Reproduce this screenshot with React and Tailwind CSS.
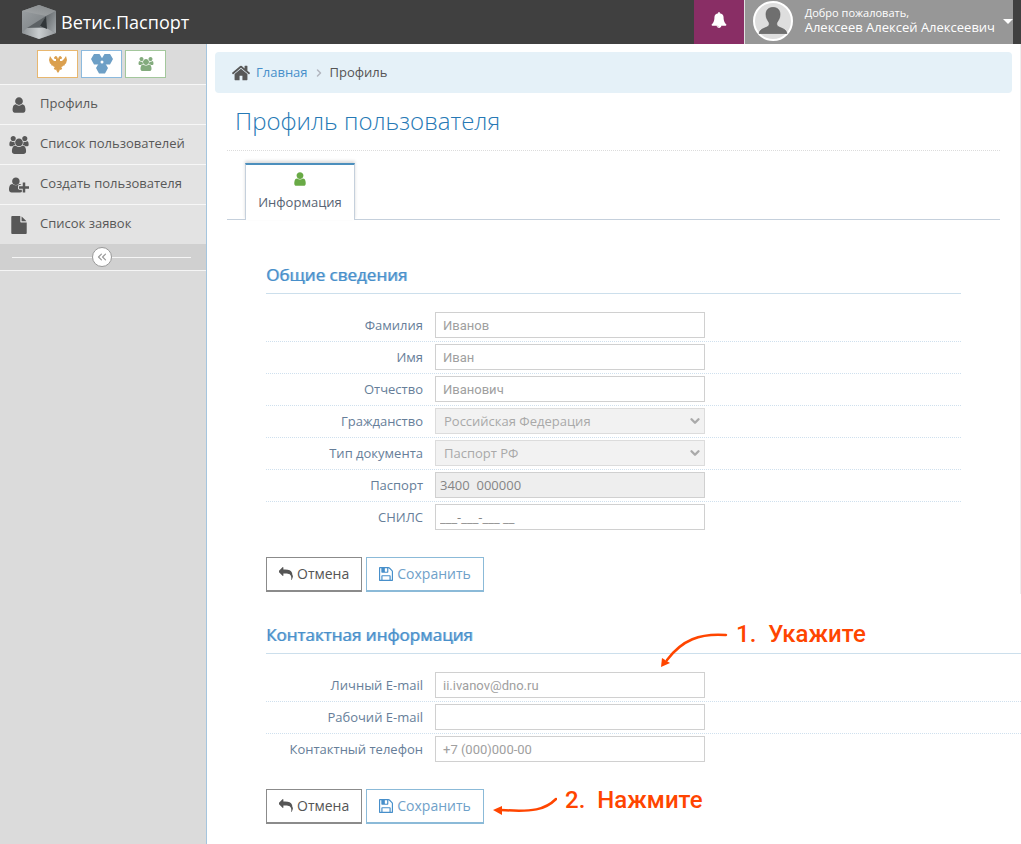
import { ChevronDown, ChevronRight, ChevronsLeft } from 'lucide-react';

const icons = {
  user: {
    box: '0 0 1792 1792',
    d: 'M1536 1399q0 109-62.5 187t-150.5 78h-854q-88 0-150.5-78t-62.5-187q0-85 8.5-160.5t31.5-152 58.5-131 94-89 134.5-34.5q131 128 313 128t313-128q76 0 134.5 34.5t94 89 58.5 131 31.5 152 8.5 160.5zm-256-887q0 159-112.5 271.5t-271.5 112.5-271.5-112.5-112.5-271.5 112.5-271.5 271.5-112.5 271.5 112.5 112.5 271.5z',
  },
  users: {
    box: '0 0 1920 1792',
    d: 'M593 896q-162 5-265 128H194q-82 0-138-40.5T0 865q0-353 124-353 6 0 43.5 21t97.5 42.5T384 597q67 0 133-23-5 37-5 66 0 139 81 256zm1071 637q0 120-73 189.5t-194 69.5H523q-121 0-194-69.5T256 1533q0-53 3.5-103.5t14-109T300 1212t43-97.5 62-81 85.5-53.5T602 960q10 0 43 21.5t73 48 107 48 135 21.5 135-21.5 107-48 73-48 43-21.5q61 0 111.5 20t85.5 53.5 62 81 43 97.5 26.5 108.5 14 109 3.5 103.5zM640 256q0 106-75 181t-181 75-181-75-75-181 75-181T384 0t181 75 75 181zm704 384q0 159-112.5 271.5T960 1024 688.5 911.5 576 640t112.5-271.5T960 256t271.5 112.5T1344 640zm576 225q0 78-56 118.5t-138 40.5h-134q-103-123-265-128 81-117 81-256 0-29-5-66 66 23 133 23 59 0 119-21.5t97.5-42.5 43.5-21q124 0 124 353zm-128-609q0 106-75 181t-181 75-181-75-75-181 75-181 181-75 181 75 75 181z',
  },
  userPlus: {
    box: '0 0 2048 1792',
    d: 'M704 896q-159 0-271.5-112.5T320 512t112.5-271.5T704 128t271.5 112.5T1088 512 975.5 783.5 704 896zm960 128h352q13 0 22.5 9.5t9.5 22.5v192q0 13-9.5 22.5t-22.5 9.5h-352v352q0 13-9.5 22.5t-22.5 9.5h-192q-13 0-22.5-9.5t-9.5-22.5v-352h-352q-13 0-22.5-9.5t-9.5-22.5v-192q0-13 9.5-22.5t22.5-9.5h352V672q0-13 9.5-22.5t22.5-9.5h192q13 0 22.5 9.5t9.5 22.5v352zm-736 224q0 52 38 90t90 38h256v238q-68 50-171 50H267q-121 0-194-69T0 1365q0-53 3.5-103.5t14-109T44 1044t43-97.5 62-81 85.5-53.5T346 792q19 0 39 17 79 61 154.5 91.5T704 931t164.5-30.5T1023 809q20-17 39-17 132 0 217 96h-223q-52 0-90 38t-38 90v232z',
  },
  file: {
    box: '0 0 1792 1792',
    d: 'M1152 512v-472q22 14 36 28l408 408q14 14 28 36h-472zm-128 32q0 40 28 68t68 28h544v1056q0 40-28 68t-68 28h-1344q-40 0-68-28t-28-68v-1600q0-40 28-68t68-28h800v544z',
  },
  home: {
    box: '0 0 1792 1792',
    d: 'M1472 992v480q0 26-19 45t-45 19h-384v-384h-256v384h-384q-26 0-45-19t-19-45v-480q0-1 .5-3t.5-3l575-474 575 474q1 2 1 6zm223-69l-62 74q-8 9-21 11h-3q-13 0-21-7l-692-577-692 577q-12 8-24 7-13-2-21-11l-62-74q-8-10-7-23.5t11-21.5l719-599q32-26 76-26t76 26l244 204v-195q0-14 9-23t23-9h192q14 0 23 9t9 23v408l219 182q10 8 11 21.5t-7 23.5z',
  },
  bell: {
    box: '0 0 1792 1792',
    d: 'M912 1696q0-16-16-16-59 0-101.5-42.5t-42.5-101.5q0-16-16-16t-16 16q0 73 51.5 124.5t124.5 51.5q16 0 16-16zm816-288q0 52-38 90t-90 38h-448q0 106-75 181t-181 75-181-75-75-181h-448q-52 0-90-38t-38-90q50-42 91-88t85-119.5 74.5-158.5 50-206 19.5-260q0-152 117-282.5t307-158.5q-8-19-8-39 0-40 28-68t68-28 68 28 28 68q0 20-8 39 190 28 307 158.5t117 282.5q0 139 19.5 260t50 206 74.5 158.5 85 119.5 91 88z',
  },
  reply: {
    box: '0 0 1792 1792',
    d: 'M1792 1120q0 166-127 451-3 7-10.5 24t-13.5 30-13 22q-12 17-28 17-15 0-23.5-10t-8.5-25q0-9 2.5-26.5t2.5-23.5q5-68 5-123 0-112-19.5-200.5t-54-153.5-89-112.5-117-80-147-47.5-171-24-196.5-7h-224v256q0 26-19 45t-45 19-45-19l-512-512q-19-19-19-45t19-45l512-512q19-19 45-19t45 19 19 45v256h224q713 0 875 403 53 134 53 333z',
  },
  save: {
    box: '128 128 1536 1536',
    d: 'M512 1536h768v-384h-768v384zm896 0h128v-896q0-14-10-38.5t-20-34.5l-281-281q-10-10-34-20t-39-10v416q0 40-28 68t-68 28h-576q-40 0-68-28t-28-68v-416h-128v1280h128v-416q0-40 28-68t68-28h832q40 0 68 28t28 68v416zm-384-928v-320q0-13-9.5-22.5t-22.5-9.5h-192q-13 0-22.5 9.5t-9.5 22.5v320q0 13 9.5 22.5t22.5 9.5h192q13 0 22.5-9.5t9.5-22.5zm640 32v928q0 40-28 68t-68 28h-1344q-40 0-68-28t-28-68v-1344q0-40 28-68t68-28h928q40 0 88 20t76 48l280 280q28 28 48 76t20 88z',
  },
};

function Icon({ name, className }) {
  return (
    <svg viewBox={icons[name].box} className={className} fill="currentColor" aria-hidden="true">
      <path d={icons[name].d} />
    </svg>
  );
}

function Logo() {
  return (
    <svg viewBox="0 0 34 34" className="h-[34px] w-[34px]" aria-hidden="true">
      <defs>
        <linearGradient id="top" x1="0" y1="1" x2="1" y2="0">
          <stop offset="0" stopColor="#a4a8aa" />
          <stop offset="1" stopColor="#85898b" />
        </linearGradient>
        <linearGradient id="left" x1="0" y1="0" x2="1" y2="1">
          <stop offset="0" stopColor="#9ca1a4" />
          <stop offset="1" stopColor="#6f7477" />
        </linearGradient>
        <linearGradient id="bottom" x1="0" y1="0" x2="1" y2="0">
          <stop offset="0" stopColor="#8c9194" />
          <stop offset="0.500" stopColor="#c9cdcf" />
          <stop offset="1" stopColor="#95999c" />
        </linearGradient>
        <linearGradient id="right" x1="0" y1="0" x2="1" y2="1">
          <stop offset="0" stopColor="#5c6164" />
          <stop offset="1" stopColor="#a6abae" />
        </linearGradient>
      </defs>
      <path d="M17 0 34 6v22l-17 6L0 28V6z" fill="url(#left)" />
      <path d="M17 0 34 6 24 11 0 6z" fill="url(#top)" />
      <path d="M24 11 34 6v22l-10-5z" fill="url(#right)" />
      <path d="M0 28 5 23l19 0 10 5-17 6z" fill="url(#bottom)" />
      <path d="M24 11 5 23 18 22z" fill="#5c6164" />
      <path d="M24 11 25 24 18 21z" fill="#313639" />
    </svg>
  );
}

function Eagle() {
  return (
    <svg viewBox="0 0 18 18" className="h-[18px] w-[18px]" fill="#dba04f" aria-hidden="true">
      <path d="M1 1 3 4l2 2h2V4H5.500L5 2.500 6.500 1 8 1.500 9 4l1-2.500 1.500-.5L13 2.500 12.500 4H11v2h2l2-2 2-3 1 4-.6 2-.4 1.500-1 .5-.5 1.500-1.500.2-1 1.300-1-.2 1.200 1.700L12 15l-1.200-.6-.4 1.600L9 18l-1.400-2-.4-1.600L6 15l-1.200-1.500L6 11.800l-1 .2-1-1.300-1.500-.2L2 9l-1-.5L.6 7 0 5z" />
    </svg>
  );
}

function Hexagons() {
  return (
    <svg viewBox="0 0 22 20" className="h-5 w-[22px]" fill="#6d9fc6" aria-hidden="true">
      <path d="M3 0h5.500L11.500 5 8.500 10.500H3L0 5z" />
      <path d="M13.500 0H19l3 5-3 5.500h-5.500l-3-5.500z" />
      <path d="M8 9h6l3 5-3 5.500H8L5 14z" />
      <path d="M8 6h6v5H8z" />
      <circle cx="11" cy="8" r="1.500" fill="#fff" />
    </svg>
  );
}

function Avatar() {
  return (
    <svg viewBox="0 0 40 40" className="h-10 w-10" aria-hidden="true">
      <circle cx="20" cy="20" r="19" fill="#dedede" stroke="#fff" strokeWidth="2" />
      <path
        d="M20 6.500c4.500 0 7 2.500 7 7 0 4-2 6-3 8-.8 2 0 3.500 2 4.500 3 1.500 7 2 8 6.500H6c1-4.500 5-5 8-6.500 2-1 2.800-2.500 2-4.500-1-2-3-4-3-8 0-4.500 2.500-7 7-7z"
        fill="#6f6f6f"
        stroke="#555"
        strokeWidth=".6"
      />
    </svg>
  );
}

const menu = [
  { icon: 'user', label: 'Профиль', size: 'h-[18px] w-[18px]' },
  { icon: 'users', label: 'Список пользователей', size: 'h-[18px] w-5' },
  { icon: 'userPlus', label: 'Создать пользователя', size: 'h-[18px] w-5' },
  { icon: 'file', label: 'Список заявок', size: 'h-[18px] w-[18px]' },
];

function Header() {
  return (
    <header className="flex h-11 items-stretch bg-[#404040] pr-2 text-white">
      <a href="#" className="flex items-center gap-[5px] pl-[22px] text-lg">
        <Logo />
        Ветис.Паспорт
      </a>
      <button aria-label="Уведомления" className="ml-auto flex w-[50px] items-center justify-center bg-[#892e65] pb-1">
        <Icon name="bell" className="h-4 w-4" />
      </button>
      <button className="flex items-center border-l border-[#e1e1e1] bg-[#979797] pb-[2px] pl-2 text-left">
        <Avatar />
        <span className="ml-3 pb-[2px] text-[13px] leading-[14px]">
          <small className="block text-[11px]">Добро пожаловать,</small>
          Алексеев Алексей Алексеевич
        </span>
        <span className="ml-2 border-x-[5px] border-t-[5px] border-x-transparent border-t-white" />
      </button>
    </header>
  );
}

function Sidebar() {
  return (
    <aside className="w-[207px] shrink-0 border-r border-[#a5c5de] bg-[#dbdbdb] text-[#585858]">
      <div className="flex h-10 items-center gap-[3px] pl-[37px]">
        <button aria-label="Россельхознадзор" className="flex h-7 w-[41px] items-center justify-center border border-[#e8b76f] bg-white">
          <Eagle />
        </button>
        <button aria-label="Компоненты" className="flex h-7 w-[41px] items-center justify-center border border-[#8cbade] bg-white">
          <Hexagons />
        </button>
        <button aria-label="Пользователи" className="flex h-7 w-[41px] items-center justify-center border border-[#a3c79c] bg-white text-[#83ab7d]">
          <Icon name="users" className="h-[14px] w-4" />
        </button>
      </div>
      <nav>
        {menu.map((item) => (
          <a
            key={item.label}
            href="#"
            className="flex h-10 items-center gap-[11px] border-t border-[#f7f7f7] bg-[#e3e3e3] pb-[2px] pl-[9px] text-[13px]"
          >
            <span className="flex w-5 justify-center pt-[2px]">
              <Icon name={item.icon} className={item.size} />
            </span>
            {item.label}
          </a>
        ))}
      </nav>
      <div className="flex h-[27px] items-center border-b border-[#f5f5f5] bg-[#d0d0d0] px-3">
        <span className="h-px w-20 bg-[#f5f5f5]" />
        <button aria-label="Свернуть меню" className="flex h-5 w-5 items-center justify-center rounded-full border border-[#999] bg-white text-[#999]">
          <ChevronsLeft size={14} strokeWidth={2} />
        </button>
        <span className="mr-[3px] h-px flex-1 bg-[#f5f5f5]" />
      </div>
    </aside>
  );
}

function Section({ title, children }) {
  return (
    <>
      <h2 className="mb-4 h-[30px] border-b border-[#ccdfec] text-[17px] leading-[22px] text-[#478fca] [text-shadow:1px_0_0_#478fca99]">
        {title}
      </h2>
      <div>{children}</div>
    </>
  );
}

function Row({ id, label, children }) {
  return (
    <div className="flex h-8 items-start border-b border-dotted border-[#cfe0ee] pt-[2px] last:border-transparent">
      <label htmlFor={id} className="mr-3 w-[157px] shrink-0 text-right text-[13px] leading-[26px] text-[#667e99]">
        {label}
      </label>
      {children}
    </div>
  );
}

function TextField({ id, label, value, type = 'text' }) {
  return (
    <Row id={id} label={label}>
      <input
        id={id}
        type={type}
        defaultValue={value}
        className="h-[26px] w-[270px] border border-[#d0d0d0] bg-white px-[7px] font-['Roboto',sans-serif] text-[13px] text-[#a0a0a0]"
      />
    </Row>
  );
}

function SelectField({ id, label, value }) {
  return (
    <Row id={id} label={label}>
      <div className="relative w-[270px]">
        <select
          id={id}
          disabled
          className="block h-[26px] w-full appearance-none border border-[#dcdcdc] bg-[#f2f2f2] px-2 pt-px text-[13px] text-[#a9a9a9]"
        >
          <option>{value}</option>
        </select>
        <ChevronDown size={14} strokeWidth={4} className="absolute top-[6px] right-[3px] text-[#aaa]" />
      </div>
    </Row>
  );
}

function Actions() {
  return (
    <div className="mt-[23px] flex gap-1 text-sm">
      <button type="button" className="flex h-[35px] items-center gap-1 border border-b-2 border-[#8b8b8b] bg-white px-3 text-[#555]">
        <Icon name="reply" className="h-[14px] w-[14px]" />
        Отмена
      </button>
      <button type="submit" className="flex h-[35px] items-center gap-1 border border-b-2 border-[#8bbad8] bg-white px-3 text-[#6fa1c9]">
        <Icon name="save" className="h-[14px] w-[14px] text-[#478fca]" />
        Сохранить
      </button>
    </div>
  );
}

function Note({ step, children }) {
  return (
    <span className="flex gap-3 font-['Roboto',sans-serif] text-2xl leading-9 font-medium text-[#ff4500]">
      <span>{step}.</span>
      <span>{children}</span>
    </span>
  );
}

export default function App() {
  const stop = (e) => e.preventDefault();

  return (
    <div className="flex min-h-screen flex-col bg-white font-['Open_Sans','Noto_Sans',sans-serif]">
      <Header />
      <div className="flex flex-1">
        <Sidebar />
        <main className="min-w-0 flex-1">
          <div className="border-r border-[#eee] pt-2 pb-[2px]">
            <nav className="mr-2 ml-2 flex h-[41px] items-center rounded bg-[#e5f1f8] pl-4 text-[13px]">
              <Icon name="home" className="h-5 w-5 text-[#585858]" />
              <a href="#" className="ml-[5px] text-[#478fca]">Главная</a>
              <ChevronRight size={12} strokeWidth={3} className="mx-[5px] text-[#b2b6bf]" />
              <span className="text-[#555]">Профиль</span>
            </nav>
            <div className="px-5">
              <h1 className="border-b border-dotted border-[#dcdcdc] pt-3 pb-[13px] pl-2 text-2xl leading-8 font-light text-[#2679b5]">
                Профиль пользователя
              </h1>
              <div className="mt-3 flex border-b border-[#c5d0dc] pl-[18px]">
                <button className="-mb-px flex h-[57px] w-[110px] flex-col items-center border-x border-t-2 border-[#c5d0dc] border-t-[#4c8fbd] bg-white pt-[6px] text-[13px] text-[#576373] shadow-[0_-2px_3px_rgba(0,0,0,0.15)]">
                  <Icon name="user" className="h-4 w-4 text-[#69aa46]" />
                  <span className="mt-[5px] leading-5">Информация</span>
                </button>
              </div>
              <form onSubmit={stop} className="mt-11 px-[39px]">
                <Section title="Общие сведения">
                  <TextField id="surname" label="Фамилия" value="Иванов" />
                  <TextField id="name" label="Имя" value="Иван" />
                  <TextField id="patronymic" label="Отчество" value="Иванович" />
                  <SelectField id="citizenship" label="Гражданство" value="Российская Федерация" />
                  <SelectField id="doc-type" label="Тип документа" value="Паспорт РФ" />
                  <Row id="passport" label="Паспорт">
                    <input
                      id="passport"
                      readOnly
                      value="3400  000000"
                      className="h-[26px] w-[270px] border border-[#d0d0d0] bg-[#eee] px-1 text-[13px] text-[#858585]"
                    />
                  </Row>
                  <Row id="snils" label="СНИЛС">
                    <input
                      id="snils"
                      defaultValue="___-___-___ __"
                      className="h-[26px] w-[270px] border border-[#d0d0d0] bg-white px-1 text-[13px] text-[#858585]"
                    />
                  </Row>
                </Section>
                <Actions />
              </form>
            </div>
          </div>

          <form onSubmit={stop} className="relative mt-[30px] pb-5 pl-[59px]">
            <Section title="Контактная информация">
              <TextField id="email" label="Личный E-mail" value="ii.ivanov@dno.ru" />
              <TextField id="work-email" label="Рабочий E-mail" value="" />
              <TextField id="phone" label="Контактный телефон" value="+7 (000)000-00" />
            </Section>
            <Actions />

            {/* step hints drawn over the form */}
            <div className="absolute -top-2 left-[453px] flex gap-2">
              <svg viewBox="0 0 68 52" className="h-[52px] w-[68px]" aria-hidden="true">
                <path d="M66 19C40 17 22 24 7 44" fill="none" stroke="#ff4500" strokeWidth="2.500" strokeLinecap="round" />
                <path d="M1 51 2 42l8 5z" fill="#ff4500" />
              </svg>
              <Note step="1">Укажите</Note>
            </div>
            <div className="absolute top-[158px] left-[286px] flex gap-2">
              <svg viewBox="0 0 64 34" className="h-[34px] w-16" aria-hidden="true">
                <path d="M63 17C52 28 40 30 8 28" fill="none" stroke="#ff4500" strokeWidth="2.500" strokeLinecap="round" />
                <path d="M0 28l9-4v9z" fill="#ff4500" />
              </svg>
              <Note step="2">Нажмите</Note>
            </div>
          </form>
        </main>
      </div>
    </div>
  );
}
